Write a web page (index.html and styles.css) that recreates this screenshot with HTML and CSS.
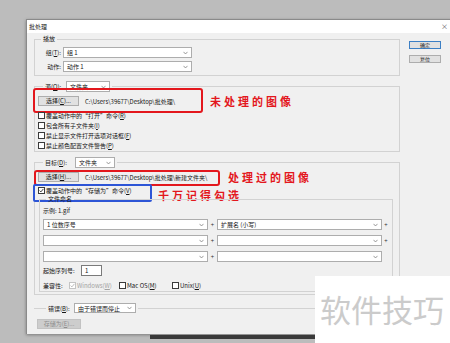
FILE: index.html
```html
<!DOCTYPE html>
<html lang="zh-CN">

<head>
    <meta charset="UTF-8">
    <meta name="viewport" content="width=device-width, initial-scale=1.0">
    <title>批处理</title>
    <link rel="stylesheet" href="styles.css">
</head>

<body>
    <div class="dialog">
        <div class="titlebar"><span>批处理</span><span class="close">×</span></div>

        <div class="dlg-body">
            <div class="main">
                <!-- 播放 -->
                <fieldset class="group play">
                    <legend>播放</legend>
                    <div class="field">
                        <span class="lbl">组(<u>T</u>):</span>
                        <span class="combo w-play"><span>组 1</span><svg class="chev" viewBox="0 0 6 4"><path d="M0.6 0.6 3 3.2 5.4 0.6" /></svg></span>
                    </div>
                    <div class="field">
                        <span class="lbl">动作:</span>
                        <span class="combo w-play"><span>动作 1</span><svg class="chev" viewBox="0 0 6 4"><path d="M0.6 0.6 3 3.2 5.4 0.6" /></svg></span>
                    </div>
                </fieldset>

                <!-- 源 -->
                <fieldset class="group source">
                    <legend class="lg-combo">
                        <span class="lg"><span class="lg-lbl w-src-l">源(<u>O</u>):</span><span class="combo w-src"><span>文件夹</span><svg class="chev" viewBox="0 0 6 4"><path d="M0.6 0.6 3 3.2 5.4 0.6" /></svg></span></span>
                    </legend>
                    <div class="pick">
                        <button class="btn">选择(<u>C</u>)...</button>
                        <span class="path">C:\Users\39677\Desktop\批处理\</span>
                        <span class="mark red m-src"></span>
                        <span class="note n-src">未处理的图像</span>
                    </div>
                    <div class="check first"><span class="box"></span>覆盖动作中的“打开”命令(<u>R</u>)</div>
                    <div class="check"><span class="box"></span>包含所有子文件夹(<u>I</u>)</div>
                    <div class="check"><span class="box"></span>禁止显示文件打开选项对话框(<u>F</u>)</div>
                    <div class="check"><span class="box"></span>禁止颜色配置文件警告(<u>P</u>)</div>
                </fieldset>

                <!-- 目标 -->
                <fieldset class="group target">
                    <legend class="lg-combo">
                        <span class="lg"><span class="lg-lbl w-tgt-l">目标(<u>D</u>):</span><span class="combo w-tgt"><span>文件夹</span><svg class="chev" viewBox="0 0 6 4"><path d="M0.6 0.6 3 3.2 5.4 0.6" /></svg></span></span>
                    </legend>
                    <div class="pick">
                        <button class="btn">选择(<u>H</u>)...</button>
                        <span class="path">C:\Users\39677\Desktop\批处理\新建文件夹\</span>
                        <span class="mark red m-tgt"></span>
                        <span class="note n-tgt">处理过的图像</span>
                    </div>
                    <div class="check saveas">
                        <span class="box"><svg viewBox="0 0 5 5"><path d="M0.6 2.6 1.9 3.9 4.4 0.9" /></svg></span>覆盖动作中的“存储为”命令(<u>V</u>)
                        <span class="mark blue m-cb"></span>
                        <span class="note n-cb">千万记得勾选</span>
                    </div>

                    <fieldset class="naming">
                        <legend>文件命名</legend>
                        <div class="sample">示例: 1.gif</div>
                        <div class="name-row">
                            <span class="combo wide"><span>1 位数序号</span><svg class="chev" viewBox="0 0 6 4"><path d="M0.6 0.6 3 3.2 5.4 0.6" /></svg></span>
                            <span class="plus">+</span>
                            <span class="combo wide"><span>扩展名 (小写)</span><svg class="chev" viewBox="0 0 6 4"><path d="M0.6 0.6 3 3.2 5.4 0.6" /></svg></span>
                            <span class="plus">+</span>
                        </div>
                        <div class="name-row">
                            <span class="combo wide"><span></span><svg class="chev" viewBox="0 0 6 4"><path d="M0.6 0.6 3 3.2 5.4 0.6" /></svg></span>
                            <span class="plus">+</span>
                            <span class="combo wide"><span></span><svg class="chev" viewBox="0 0 6 4"><path d="M0.6 0.6 3 3.2 5.4 0.6" /></svg></span>
                            <span class="plus">+</span>
                        </div>
                        <div class="name-row">
                            <span class="combo wide"><span></span><svg class="chev" viewBox="0 0 6 4"><path d="M0.6 0.6 3 3.2 5.4 0.6" /></svg></span>
                            <span class="plus">+</span>
                            <span class="combo wide"><span></span><svg class="chev" viewBox="0 0 6 4"><path d="M0.6 0.6 3 3.2 5.4 0.6" /></svg></span>
                        </div>
                        <div class="serial">
                            <span class="serial-lbl">起始序列号:</span>
                            <span class="input">1</span>
                        </div>
                        <div class="compat">
                            <span class="compat-lbl">兼容性:</span>
                            <span class="opt o-win off"><span class="box"><svg viewBox="0 0 5 5"><path d="M0.6 2.6 1.9 3.9 4.4 0.9" /></svg></span>Windows(<u>W</u>)</span>
                            <span class="opt o-mac"><span class="box"></span>Mac OS(<u>M</u>)</span>
                            <span class="opt"><span class="box"></span>Unix(<u>U</u>)</span>
                        </div>
                    </fieldset>
                </fieldset>

                <!-- 错误 -->
                <fieldset class="group errors">
                    <legend class="lg-combo sm">
                        <span class="lg"><span class="lg-lbl w-err-l">错误(<u>B</u>):</span><span class="combo w-err"><span>由于错误而停止</span><svg class="chev" viewBox="0 0 6 4"><path d="M0.6 0.6 3 3.2 5.4 0.6" /></svg></span></span>
                    </legend>
                    <button class="btn disabled">存储为(<u>E</u>)...</button>
                </fieldset>
            </div>

            <div class="side">
                <button class="btn primary">确定</button>
                <button class="btn">复位</button>
            </div>
        </div>
    </div>
    <div class="strip"></div>

    <div class="watermark">软件技巧</div>
</body>

</html>
```

FILE: styles.css
```css
* {
    box-sizing: border-box;
}

html,
body {
    margin: 0;
    overflow: hidden;
}

body {
    position: relative;
    width: 450px;
    height: 343px;
    background: #bcbcbc;
    font-family: "Noto Sans CJK SC", "Noto Sans", sans-serif;
    font-size: 6px;
    color: #161616;
}

u {
    text-decoration: underline;
}

/* window */
.dialog {
    margin: 19px 0 0 26px;
    width: 430px;
    height: 315px;
    background: #f0f0f0;
    border-top: 1px solid #8a8a8a;
    border-left: 1px solid #8a8a8a;
    box-shadow: 0 1px 3px rgba(0, 0, 0, 0.35);
}

.titlebar {
    display: flex;
    justify-content: space-between;
    height: 13px;
    line-height: 13px;
    padding: 0 8px 0 2px;
    background: #fff;
}

.close {
    color: #555;
    font-size: 7px;
}

.dlg-body {
    display: flex;
    padding: 1px 0 0 7px;
}

.main {
    width: 366px;
}

.side {
    margin-left: 9px;
    padding-top: 7px;
}

/* group boxes */
.group,
.naming {
    position: relative;
    min-width: 0;
    margin: 0;
    border: 1px solid #d2d2d2;
}

.group legend,
.naming legend {
    display: block;
    padding: 0 2px;
}

.play {
    padding: 3px 5px 3px 5px;
}

.play legend {
    height: 10px;
    line-height: 10px;
    margin-left: 1px;
}

.source {
    margin-top: 5px;
    padding: 4px 3px 1px 3px;
}

.target {
    margin-top: 5px;
    padding: 4px 3px 2px 3px;
}

.errors {
    margin-top: 8px;
    padding: 6px 3px 0 3px;
    border-left: none;
    border-right: none;
    border-bottom: none;
}

.lg-combo {
    height: 11px;
    margin-left: 5px;
}

.lg-combo.sm {
    height: 10px;
    margin-left: 9px;
}

.lg {
    display: flex;
    align-items: center;
    height: 100%;
}

.lg-lbl {
    margin-right: 2px;
    white-space: nowrap;
}

.w-src-l {
    width: 19px;
}

.w-tgt-l {
    width: 28px;
}

.w-err-l {
    width: 24px;
}

/* controls */
.combo {
    display: flex;
    align-items: center;
    justify-content: space-between;
    height: 11px;
    padding: 0 3px;
    border: 1px solid #adadad;
    background: #fff;
    white-space: nowrap;
}

.lg-combo.sm .combo {
    height: 10px;
}

.chev {
    width: 5px;
    height: 4px;
    flex: none;
}

.chev path {
    fill: none;
    stroke: #6a6a6a;
    stroke-width: 0.8;
}

.w-play {
    width: 129px;
}

.w-src {
    width: 44px;
}

.w-tgt {
    width: 40px;
}

.w-err {
    width: 62px;
}

.field {
    display: flex;
    align-items: center;
    height: 11px;
}

.field+.field {
    margin-top: 3px;
}

.lbl {
    width: 21px;
    margin-right: 2px;
    text-align: right;
    white-space: nowrap;
}

.btn {
    display: block;
    width: 41px;
    height: 10px;
    padding: 0;
    border: 1px solid #adadad;
    background: #e1e1e1;
    font-family: inherit;
    font-size: 6px;
    line-height: 8px;
    color: #161616;
    white-space: nowrap;
}

.btn.disabled {
    width: 44px;
    background: #cdcdcd;
    border-color: #c2c2c2;
    color: #8e8e8e;
}

.side .btn {
    width: 32px;
    height: 8px;
    font-size: 5px;
    line-height: 6px;
}

.side .btn+.btn {
    margin-top: 6px;
}

.side .btn.primary {
    border-color: #3c7fc4;
}

.pick {
    position: relative;
    display: flex;
    align-items: center;
    height: 10px;
}

.path {
    margin-left: 6px;
    white-space: nowrap;
}

.check {
    position: relative;
    display: flex;
    align-items: center;
    height: 10px;
    white-space: nowrap;
}

.check.first {
    margin-top: 4px;
}

.check.saveas {
    margin-top: 3px;
}

.box {
    display: flex;
    align-items: center;
    justify-content: center;
    flex: none;
    width: 7px;
    height: 7px;
    margin-right: 1px;
    border: 1px solid #3a3a3a;
    background: #fff;
}

.box svg {
    width: 5px;
    height: 5px;
}

.box path {
    fill: none;
    stroke: #2b2b2b;
    stroke-width: 0.9;
}

/* 文件命名 */
.naming {
    margin: 0 3px 0 1px;
    padding: 3px 0 1px 3px;
}

.naming legend {
    height: 8px;
    line-height: 8px;
    margin-left: 3px;
}

.sample {
    height: 10px;
    line-height: 10px;
}

.name-row {
    display: flex;
    align-items: center;
    margin-top: 5px;
}

.sample+.name-row {
    margin-top: 3px;
}

.wide {
    width: 165px;
}

.plus {
    width: 9px;
    text-align: center;
    color: #333;
}

.name-row .plus:last-child {
    width: 8px;
}

.serial {
    display: flex;
    align-items: center;
    height: 11px;
    margin-top: 3px;
}

.serial-lbl {
    width: 36px;
    margin-right: 2px;
}

.input {
    display: flex;
    align-items: center;
    width: 21px;
    height: 11px;
    padding-left: 3px;
    border: 1px solid #7a7a7a;
    background: #fff;
}

.compat {
    display: flex;
    align-items: center;
    height: 10px;
    margin-top: 4px;
    white-space: nowrap;
}

.compat-lbl {
    width: 26px;
}

.opt {
    display: flex;
    align-items: center;
}

.o-win {
    width: 50px;
}

.o-mac {
    width: 53px;
}

.opt.off {
    color: #a2a2a2;
}

.opt.off .box {
    border-color: #c4c4c4;
}

.opt.off .box path {
    stroke: #b4b4b4;
}

/* annotations drawn over the screenshot */
.mark {
    position: absolute;
    border-radius: 3px;
}

.mark.red {
    border: 2px solid #e3171d;
}

.mark.blue {
    border: 2px solid #2d55d6;
    border-radius: 2px;
}

.m-src {
    left: -5px;
    top: -8px;
    width: 170px;
    height: 25px;
}

.m-tgt {
    left: -4px;
    top: -2px;
    width: 186px;
    height: 16px;
}

.m-cb {
    left: -5px;
    top: -1px;
    width: 119px;
    height: 18px;
}

.note {
    position: absolute;
    top: 0;
    height: 10px;
    line-height: 10px;
    font-size: 11px;
    font-weight: bold;
    letter-spacing: 3px;
    color: #e3171d;
    white-space: nowrap;
}

.n-src {
    left: 172px;
}

.n-tgt {
    left: 190px;
}

.n-cb {
    left: 120px;
    top: 5px;
}

.strip {
    width: 165px;
    height: 4px;
    margin: 1px 0 0 150px;
    background: #3a3a3a;
}

.watermark {
    position: absolute;
    left: 315px;
    top: 276px;
    right: 0;
    bottom: 0;
    padding: 17px 0 0 5px;
    background: #fff;
    font-size: 31px;
    line-height: 1;
    color: #cbcbcb;
    white-space: nowrap;
}
```
